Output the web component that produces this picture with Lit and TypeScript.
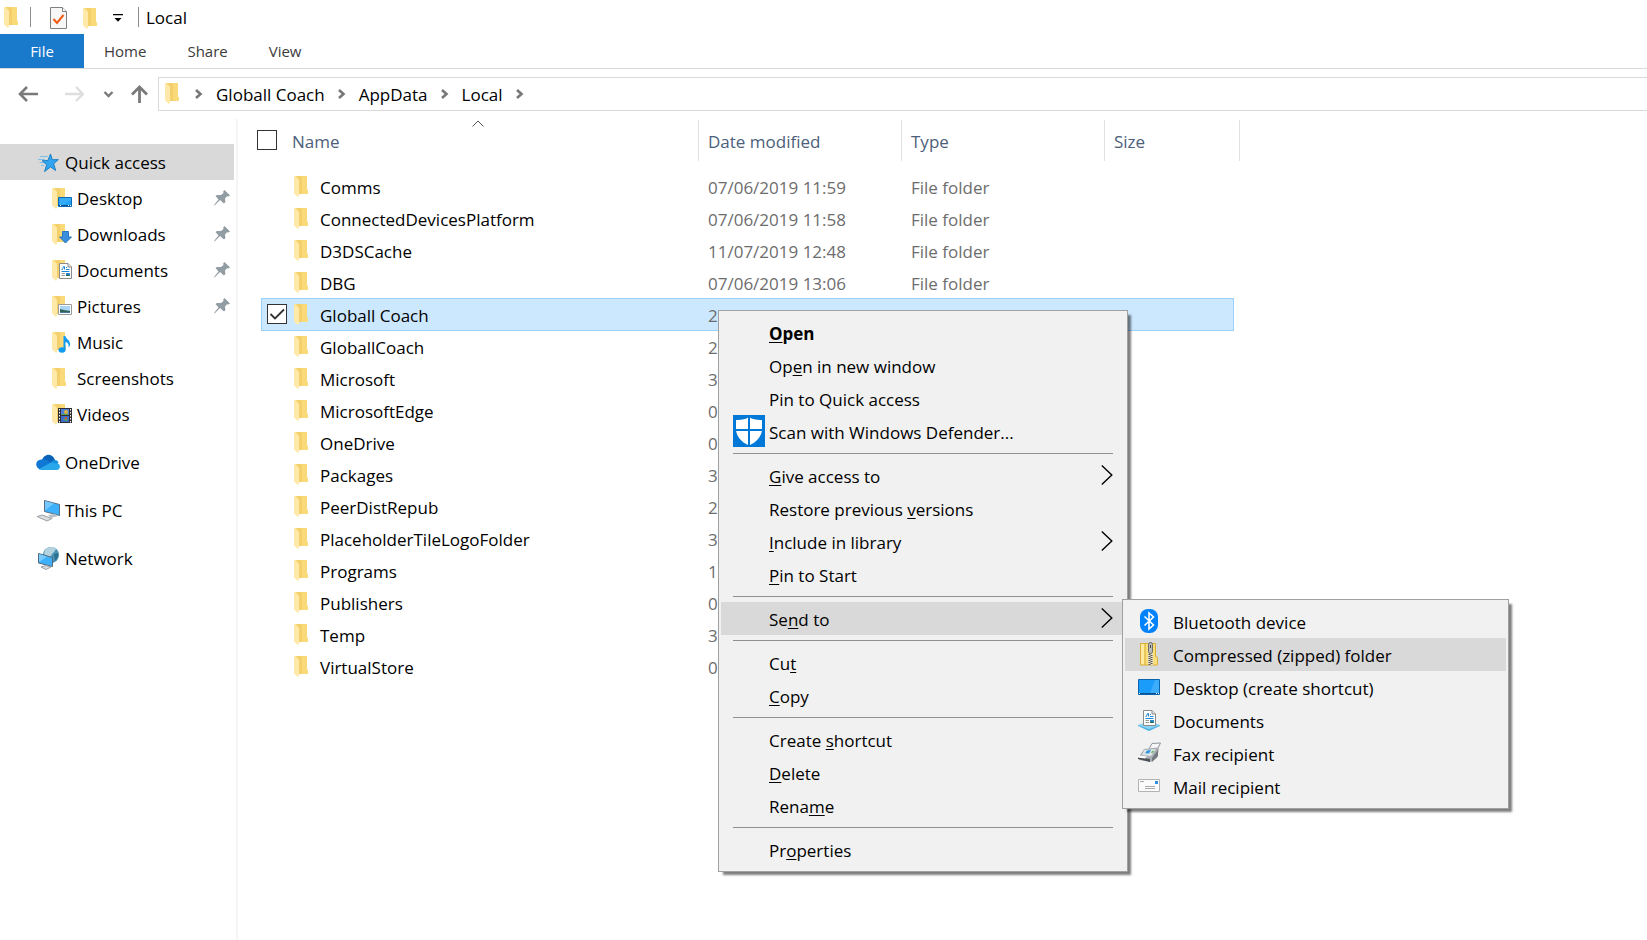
import { LitElement, html, svg, css, nothing } from "lit";
import { customElement, property } from "lit/decorators.js";

/* ---------- icons ---------- */

const folderShape = svg`
  <path d="M1 0h12v13.500l1 .8V18H2z" fill="#fbdc7e"/>
  <path d="M4 2h4v16H4z" fill="#eec963"/>
  <path d="M8 0h5v18H8z" fill="#fad978"/>
  <path d="M0 0l5 3.500V20l-1 1-4-3.500z" fill="#ffe9a9"/>
  <path d="M2.500 0H8v18H5V3.500z" fill="#f4d06c"/>`;

const folder = html`<svg width="14" height="21" viewBox="0 0 14 21" aria-hidden="true">${folderShape}</svg>`;

const docShape = svg`
  <path d="M.5.5h8.500l3.500 3.500v11.500H.5z" fill="#fff" stroke="#8b8b8b"/>
  <path d="M9 .5V4h3.500" fill="#e5e5e5" stroke="#8b8b8b"/>
  <path d="M2.500 6.500h1l1-3h1v3M7 4.500h1M7 6.500h3.500M2.500 8.500h8" stroke="#1f86d6" fill="none"/>
  <path d="M2.500 10.500h3.500M2.500 12.500h3.500" stroke="#999"/>
  <path d="M7 10h4v3H7z" fill="#2b8bd8"/><path d="M7 12l2-1 2 2H7z" fill="#2f6a4f"/>`;

const nested = (overlay: unknown) => html`<svg width="24" height="24" viewBox="0 0 24 24" aria-hidden="true">
  <g transform="translate(4 2)">${folderShape}</g>${overlay}</svg>`;

const icons: Record<string, unknown> = {
  quick: html`<svg width="24" height="24" viewBox="1 0 24 24" aria-hidden="true">
    <path d="M5 6.500h8M3 9.500h7M4.500 12.500h6M6 15.500h3" stroke="#7cc0ef" stroke-width="1"/>
    <path d="M15.500 4l1.800 5.800 6-.2-4.600 4.200 2 6.700-5.200-3.600-6 4.700 2.200-6.800-4.500-4 5.700-.3z" fill="#31a5f0" stroke="#1c7fc4"/>
  </svg>`,
  desktop: nested(svg`<path d="M10.500 11.500h13v9h-13z" fill="#22a2f7" stroke="#0d6bb5"/><path d="M12 12h11v2l-8 5h-3z" fill="#4ab5fb" opacity=".5"/><path d="M10.500 19.500h13" stroke="#0a4f8f"/><path d="M12 19.500h2M20 19.500h3" stroke="#fff" stroke-dasharray="1 1"/>`),
  downloads: nested(svg`<path d="M14.500 9.500h6v5.500h3l-6 6-6-6h3z" fill="#3a8fdc" stroke="#2a76bf"/>`),
  documents: nested(svg`<g transform="translate(11 5)">${docShape}</g>`),
  pictures: nested(svg`<path d="M10.500 10.500h13v10h-13z" fill="#fff" stroke="#9a9a9a"/><path d="M12 12h10v7H12z" fill="#a9d4f4"/><path d="M12 15l4 1 6 1v2H12z" fill="#2f6358"/><path d="M12 18h10v1H12z" fill="#47799e"/>`),
  music: nested(svg`<ellipse cx="14" cy="20" rx="3.500" ry="2.700" fill="#119cf0"/><path d="M15.500 20V6h2c0 3 5 4 4.500 8.500 0 1.200-.6 2.500-1.500 3 .8-3.200-1-5-3-5.500v8z" fill="#119cf0"/>`),
  screenshots: nested(nothing),
  videos: nested(svg`<path d="M10 6h14v15H10z" fill="#2f2f33"/><path d="M13 7h8v6h-8z" fill="#4f7fd8"/><path d="M13 14h8v6h-8z" fill="#3d6bcb"/>
    <circle cx="18" cy="10" r="2" fill="#e0b23c"/><path d="M14 12h6v1h-6zM15 18l3-3 2 4z" fill="#58a24a"/><path d="M17 15h2v2h-2z" fill="#c8553c"/>
    <path d="M11.500 7v14M22.500 7v14" stroke="#fff" stroke-dasharray="1.500 1.500"/>`),
  onedrive: html`<svg width="24" height="24" viewBox="0 0 24 24" aria-hidden="true">
    <path d="M6 10C7.500 5 14 2 18 8l1 2-5 5z" fill="#0a63b8"/>
    <path d="M5.500 9.500C9 8.500 12 10 15 13l-11 6.500C-1.500 17-1 10 5.500 9.500z" fill="#0f78d4"/>
    <path d="M15 12.500c2-3.500 7-3 7.500.5L18 16z" fill="#1490df"/>
    <path d="M3 19l12-6.500 8 1.500c1.800 2.500.8 6-2.500 6H5.500C4.500 20 3.600 19.700 3 19z" fill="#28a8ea"/>
  </svg>`,
  pc: html`<svg width="24" height="24" viewBox="0 0 24 24" aria-hidden="true">
    <path d="M8.500 2.500l15 4v11l-15-4z" fill="#3fb0fb" stroke="#5b6f80"/>
    <path d="M9 3l9 2.500-9 7z" fill="#74c8ff"/>
    <path d="M12 17l7-1 3 2-7 2z" fill="#b9c0c6"/>
    <path d="M1 18.500l5-1.500 10 3.500-5 2.500z" fill="#d9dde0" stroke="#9aa2a8"/>
  </svg>`,
  network: html`<svg width="24" height="24" viewBox="0 0 24 24" aria-hidden="true">
    <circle cx="15" cy="9" r="8" fill="#4a93b4"/>
    <path d="M9 4c3-3.500 8-4 11-1l-2 3-2 2-2 4-4-2-2-2z" fill="#b5d3df"/><path d="M18 8l4-1c.6 3-.5 6-3 8z" fill="#2c708f"/>
    <path d="M2.500 7.500l14 4v9l-14-3.500z" fill="#3fb0fb" stroke="#53697a"/><path d="M3 8l8 2.500L3 16z" fill="#7accff"/>
    <path d="M5 21l5-1.500 5 1.500-5 2.500z" fill="#d9dde0" stroke="#9aa2a8"/>
  </svg>`,
  pin: html`<svg width="16" height="16" viewBox="0 0 16 16" aria-hidden="true">
    <path d="M10.500 0L16 5.500l-1.500 1-1.500-.3-2 2.300.4 3.500-1.400 1.500-4-3.500L.5 15.500 0 15l4.500-5.500L1.500 6 3 5h4l2.500-2-.2-1.800z" fill="#919ca3"/>
  </svg>`,
  defender: html`<svg width="32" height="32" viewBox="0 0 32 32" aria-hidden="true">
    <path d="M0 0h32v32H0z" fill="#0078d7"/>
    <path d="M16 2c3.500 2.500 8 3.200 13 3v9c0 7-5 13-13 16.500C8 27 3 21 3 14V5c5 .2 9.500-.5 13-3z" fill="#fff"/>
    <path d="M16 1v30M2 15h28" stroke="#0078d7" stroke-width="2"/>
  </svg>`,
  arrow: html`<svg class="arrow" width="12" height="20" viewBox="0 0 12 20" aria-hidden="true"><path d="M.8.500l10 9.500-10 9.500" fill="none" stroke="#000" stroke-width="1.400"/></svg>`,
  bluetooth: html`<svg width="24" height="24" viewBox="0 0 24 24" aria-hidden="true">
    <rect x="3" width="18" height="24" rx="8" fill="#0082fc"/>
    <path d="M7.500 7.500l9 8.500-4.500 4V4l4.500 4-9 8.500" fill="none" stroke="#fff" stroke-width="1.600"/>
  </svg>`,
  zip: html`<svg width="24" height="24" viewBox="0 0 24 24" aria-hidden="true">
    <path d="M3.500 1.500h15v13l2 1v7.500h-17z" fill="#fbdf7c" stroke="#d9ae37"/>
    <path d="M8 2v21" stroke="#d9ae37"/><path d="M4 2h3v20H4z" fill="#ffeb9f"/>
    <path d="M11 12h5v11h-5z" fill="#e9e2c8"/><path d="M12.500 12v11" stroke="#555" stroke-dasharray="1 1" stroke-width="2"/><path d="M14.500 13v10" stroke="#555" stroke-dasharray="1 1" stroke-width="2"/>
    <rect x="11.500" y=".5" width="4" height="11" rx="2" fill="#bdbdbd" stroke="#6a6a6a"/><path d="M13 3h1v3h-1z" fill="#444"/>
  </svg>`,
  screen: html`<svg width="24" height="24" viewBox="0 0 24 24" aria-hidden="true">
    <path d="M1.500 4.500h21v15h-21z" fill="#1a9dfa" stroke="#0a64ad"/><path d="M22 5v13h-9L18 5z" fill="#3cadfb"/>
    <path d="M1.500 18.500h21" stroke="#0a4f8f"/><path d="M2 18.500h2M19 18.500h3" stroke="#fff" stroke-dasharray="1 1"/>
  </svg>`,
  library: html`<svg width="24" height="24" viewBox="0 0 24 24" aria-hidden="true">
    <path d="M1 17l11-4 11 4-11 6z" fill="#8ad3f5"/><path d="M1 17l11 4 11-4v1l-11 5-11-5z" fill="#55b4e4"/>
    <g transform="translate(6 2)">${docShape}</g>
  </svg>`,
  fax: html`<svg width="24" height="24" viewBox="0 0 24 24" aria-hidden="true">
    <path d="M12 8l3-5.500 8.500-.5-4 8z" fill="#f4f6f8" stroke="#8e959b"/>
    <path d="M3 14l4-6 13-1.500 2 1.500-2 9-6 4-12-2z" fill="#a9afb4"/>
    <path d="M7 9l12-1-5 7-9-1z" fill="#dfe4e8"/><path d="M10 9.500l4-.4-2 3.400-4-.2z" fill="#2f95dd"/>
    <path d="M15 10l2-.3-1 2-2 .2z" fill="#5ab55a"/>
    <path d="M1 16l12 2v3l-12-3z" fill="#4c5257"/><path d="M2 14.500l8 1-2 2-7-1z" fill="#fff"/>
    <path d="M15 17l6-8v6l-6 6z" fill="#74797e"/>
  </svg>`,
  mail: html`<svg width="24" height="24" viewBox="0 0 24 24" aria-hidden="true">
    <path d="M1.500 5.500h21v12h-21z" fill="#fbfbfb" stroke="#b3b3b3"/>
    <path d="M3 7.500h4M8 12.500h10M8 14.500h10" stroke="#a9a9a9"/><path d="M18 7h3v3h-3z" fill="#2f8fe0"/>
  </svg>`,
};

const crumbArrow = html`<svg class="crumb-arrow" width="8" height="12" viewBox="0 0 8 12" aria-hidden="true"><path d="M1 2l4.500 4L1 10" fill="none" stroke="#777" stroke-width="2.600"/></svg>`;

/* ---------- data ---------- */

const tabs = ["Home", "Share", "View"];
const crumbs = ["Globall Coach", "AppData", "Local"];

const quickLinks = [
  { icon: "desktop", label: "Desktop", pinned: true },
  { icon: "downloads", label: "Downloads", pinned: true },
  { icon: "documents", label: "Documents", pinned: true },
  { icon: "pictures", label: "Pictures", pinned: true },
  { icon: "music", label: "Music", pinned: false },
  { icon: "screenshots", label: "Screenshots", pinned: false },
  { icon: "videos", label: "Videos", pinned: false },
];

const places = [
  { icon: "onedrive", label: "OneDrive" },
  { icon: "pc", label: "This PC" },
  { icon: "network", label: "Network" },
];

// name, date modified, type
const files: [string, string, string?][] = [
  ["Comms", "07/06/2019 11:59", "File folder"],
  ["ConnectedDevicesPlatform", "07/06/2019 11:58", "File folder"],
  ["D3DSCache", "11/07/2019 12:48", "File folder"],
  ["DBG", "07/06/2019 13:06", "File folder"],
  ["Globall Coach", "29/07/2019 17:22", "File folder"],
  ["GloballCoach", "2"],
  ["Microsoft", "3"],
  ["MicrosoftEdge", "0"],
  ["OneDrive", "0"],
  ["Packages", "3"],
  ["PeerDistRepub", "2"],
  ["PlaceholderTileLogoFolder", "3"],
  ["Programs", "1"],
  ["Publishers", "0"],
  ["Temp", "3"],
  ["VirtualStore", "0"],
];

interface Entry {
  label: string; // an underscore stands before the access key letter
  icon?: string;
  bold?: boolean;
  active?: boolean;
  arrow?: boolean;
  children?: Entry[];
}

const contextMenu: Entry[][] = [
  [
    { label: "_Open", bold: true },
    { label: "Op_en in new window" },
    { label: "Pin to Quick access" },
    { label: "Scan with Windows Defender...", icon: "defender" },
  ],
  [
    { label: "_Give access to", arrow: true },
    { label: "Restore previous _versions" },
    { label: "_Include in library", arrow: true },
    { label: "_Pin to Start" },
  ],
  [
    {
      label: "Se_nd to",
      arrow: true,
      active: true,
      children: [
        { label: "Bluetooth device", icon: "bluetooth" },
        { label: "Compressed (zipped) folder", icon: "zip", active: true },
        { label: "Desktop (create shortcut)", icon: "screen" },
        { label: "Documents", icon: "library" },
        { label: "Fax recipient", icon: "fax" },
        { label: "Mail recipient", icon: "mail" },
      ],
    },
  ],
  [{ label: "Cu_t" }, { label: "_Copy" }],
  [{ label: "Create _shortcut" }, { label: "_Delete" }, { label: "Rena_me" }],
  [{ label: "Pr_operties" }],
];

const withKey = (label: string) => {
  const at = label.indexOf("_");
  return at < 0
    ? label
    : html`${label.slice(0, at)}<u>${label[at + 1]}</u>${label.slice(at + 2)}`;
};

/* ---------- menu ---------- */

@customElement("popup-menu")
class PopupMenu extends LitElement {
  @property({ attribute: false }) groups: Entry[][] = [];

  static styles = css`
    :host {
      display: block;
      box-sizing: border-box;
      padding: 5px 2px;
      background: #f1f1f1;
      border: 1px solid #a0a0a0;
      box-shadow: 4px 4px 2px -1px rgba(0, 0, 0, 0.5);
    }
    .entry {
      position: relative;
    }
    .item {
      display: flex;
      align-items: center;
      box-sizing: border-box;
      width: 100%;
      height: 33px;
      margin: 0;
      padding: 0 12px;
      border: 0;
      background: none;
      color: #000;
      font: inherit;
      text-align: left;
      white-space: nowrap;
    }
    .active {
      background: #d9d9d9;
    }
    .bold {
      font-weight: 700;
    }
    .slot {
      display: flex;
      flex: none;
      width: 36px;
      margin-bottom: 1px;
    }
    .label {
      flex: 1;
      padding-top: 2px;
    }
    .arrow {
      margin-bottom: 2px;
    }
    u {
      text-decoration-thickness: 1px;
      text-underline-offset: 2px;
      text-decoration-skip-ink: none;
    }
    .rule {
      height: 1px;
      margin: 5px 12px;
      border: 0;
      background: #919191;
    }
    .sub {
      position: absolute;
      top: -3px;
      left: calc(100% - 3px);
      width: 387px;
      z-index: 1;
    }
    svg {
      display: block;
    }
  `;

  render() {
    return this.groups.map(
      (group, i) => html`
        ${i ? html`<hr class="rule" />` : nothing}
        ${group.map(
          (e) => html`<div class="entry">
            <button type="button" role="menuitem" class="item ${e.active ? "active" : ""} ${e.bold ? "bold" : ""}">
              <span class="slot">${e.icon ? icons[e.icon] : nothing}</span>
              <span class="label">${withKey(e.label)}</span>
              ${e.arrow ? icons.arrow : nothing}
            </button>
            ${e.children
              ? html`<popup-menu class="sub" role="menu" .groups=${[e.children]}></popup-menu>`
              : nothing}
          </div>`
        )}
      `
    );
  }
}

/* ---------- window ---------- */

@customElement("app-root")
class AppRoot extends LitElement {
  static styles = css`
    :host {
      display: flex;
      flex-direction: column;
      position: relative;
      min-height: 100vh;
      overflow: hidden;
      background: #fff;
      color: #000;
      font: 17px/24px "Open Sans", "Noto Sans", sans-serif;
    }
    svg {
      display: block;
      flex: none;
    }
    button {
      margin: 0;
      padding: 0;
      border: 0;
      background: none;
      color: inherit;
      font: inherit;
    }
    a {
      color: inherit;
      text-decoration: none;
    }

    .title-bar {
      display: flex;
      align-items: center;
      height: 34px;
      padding-left: 4px;
    }
    .divider {
      width: 1px;
      height: 20px;
      background: #8c8c8c;
    }
    .title-bar .divider:first-of-type {
      margin: 0 19px 0 12px;
    }
    .tools {
      display: flex;
      align-items: center;
      gap: 16px;
      margin-right: 15px;
    }
    .tools svg {
      margin-top: 2px;
    }
    .title {
      margin: 0 0 0 7px;
      padding-top: 2px;
      font: inherit;
    }

    .tabs {
      display: flex;
      gap: 1px;
      height: 34px;
      border-bottom: 1px solid #dadada;
      font-size: 15px;
      color: #3b3b3b;
    }
    .tab {
      padding: 0 20px;
    }
    .file {
      width: 84px;
      margin-right: -1px;
      background: #1979ca;
      color: #fff;
    }

    .nav {
      display: flex;
      align-items: center;
      padding: 8px 0 8px 18px;
    }
    .arrows {
      display: flex;
      align-items: center;
      margin-right: 9px;
    }
    .back {
      margin-right: 26px;
    }
    .forward {
      margin-right: 19px;
    }
    .recent {
      margin-right: 17px;
    }
    .address {
      display: flex;
      flex: 1;
      align-items: center;
      height: 32px;
      padding-left: 6px;
      border: 1px solid #d9d9d9;
      border-right: 0;
    }
    .address > svg:first-child {
      margin: 0 3px 2px 0;
    }
    .crumb {
      padding-top: 1px;
    }
    .crumb-arrow {
      margin: 0 13px;
    }

    .body {
      display: flex;
      flex: 1;
    }
    .side {
      flex: none;
      box-sizing: border-box;
      width: 238px;
      padding: 25px 2px 0 0;
      border-right: 2px solid #f5f5f5;
    }
    .place {
      display: flex;
      align-items: center;
      gap: 5px;
      height: 36px;
      padding: 0 4px 0 36px;
    }
    .place .name {
      flex: 1;
      padding-top: 2px;
    }
    .current {
      background: #d9d9d9;
    }
    .child {
      padding-left: 48px;
    }
    .root {
      margin-top: 12px;
    }

    .list {
      flex: 1;
      padding: 0 0 0 19px;
    }
    table,
    thead,
    tbody {
      display: block;
    }
    tr {
      display: grid;
      align-items: center;
    }
    th {
      padding: 0;
      font-weight: 400;
      text-align: left;
      color: #4c607a;
    }
    td {
      padding: 2px 0 0 10px;
      color: #6d6d6d;
    }
    .head {
      position: relative;
      grid-template-columns: 35px 406px 203px 203px 136px;
      width: 983px;
      height: 41px;
      margin: 1px 0 9px;
    }
    .head th {
      display: flex;
      align-items: center;
      box-sizing: border-box;
      height: 100%;
    }
    .head .text {
      padding-top: 2px;
    }
    .head .col {
      padding-left: 9px;
      border-left: 1px solid #e2e2e2;
    }
    .head .last {
      border-right: 1px solid #e2e2e2;
    }
    .sort {
      position: absolute;
      top: 0;
      left: 215px;
    }
    .row {
      grid-template-columns: 32px 404px 203px 203px;
      box-sizing: border-box;
      width: 973px;
      height: 33px;
      margin: 0 0 -1px 4px;
      border: 1px solid transparent;
    }
    .row .tick {
      display: flex;
      padding: 0 0 0 5px;
    }
    .row .file-name {
      display: flex;
      align-items: center;
      gap: 12px;
      padding: 0;
      color: #000;
    }
    .file-name span {
      padding-top: 2px;
    }
    .selected {
      background: #cce8ff;
      border-color: #99d1ff;
    }
    input {
      appearance: none;
      box-sizing: border-box;
      width: 20px;
      height: 20px;
      margin: 0 0 1px;
      border: 1px solid #333;
      background: #fff;
    }
    input:checked {
      background: #fff
        url('data:image/svg+xml,<svg xmlns="http://www.w3.org/2000/svg" viewBox="0 0 18 18"><path d="M2.500 9l4.500 4.500 9-9" fill="none" stroke="%23333" stroke-width="1.800"/></svg>');
    }

    .menu {
      position: absolute;
      top: 310px;
      left: 718px;
      width: 410px;
    }
  `;

  render() {
    return html`
      <header>
        <div class="title-bar">
          ${folder}
          <div class="divider"></div>
          <div class="tools">
            <button type="button" aria-label="Properties">
              <svg width="17" height="22" viewBox="0 0 17 22">
                <path d="M.5.500h12l4 4v17H.5z" fill="#f7f7f7" stroke="#808080" />
                <path d="M12.500.500v4h4" fill="#fff" stroke="#808080" />
                <path d="M3.500 12l3.500 4 6.500-8" fill="none" stroke="#f05a14" stroke-width="2" />
              </svg>
            </button>
            <button type="button" aria-label="New folder">${folder}</button>
            <button type="button" aria-label="Customize Quick Access Toolbar">
              <svg width="10" height="8" viewBox="0 0 10 8"><path d="M0 0h10v1.200H0zM1.500 4h7L5 7.800z" /></svg>
            </button>
          </div>
          <div class="divider"></div>
          <h1 class="title">Local</h1>
        </div>
        <nav class="tabs">
          <button type="button" class="file">File</button>
          ${tabs.map((t) => html`<button type="button" class="tab">${t}</button>`)}
        </nav>
      </header>

      <div class="nav">
        <div class="arrows">
          <button type="button" class="back" aria-label="Back">
            <svg width="20" height="16" viewBox="0 0 20 16"><path d="M9 1L2 8l7 7M2 8h18" fill="none" stroke="#7a7a7a" stroke-width="2.600" /></svg>
          </button>
          <button type="button" class="forward" aria-label="Forward">
            <svg width="20" height="16" viewBox="0 0 20 16"><path d="M12 1l7 7-7 7M19 8H1" fill="none" stroke="#dedede" stroke-width="2.400" /></svg>
          </button>
          <button type="button" class="recent" aria-label="Recent locations">
            <svg width="11" height="7" viewBox="0 0 11 7"><path d="M1.500 1l4 4 4-4" fill="none" stroke="#7a7a7a" stroke-width="2.400" /></svg>
          </button>
          <button type="button" aria-label="Up">
            <svg width="18" height="18" viewBox="0 0 18 18"><path d="M1 9.500L8.500 2 16 9.500M8.500 2v16" fill="none" stroke="#7a7a7a" stroke-width="2.800" /></svg>
          </button>
        </div>
        <div class="address">
          ${folder} ${crumbArrow}
          ${crumbs.map((c) => html`<button type="button" class="crumb">${c}</button>${crumbArrow}`)}
        </div>
      </div>

      <div class="body">
        <nav class="side">
          <a class="place current" href="#quick">${icons.quick}<span class="name">Quick access</span></a>
          ${quickLinks.map(
            (q) => html`<a class="place child" href="#${q.label}">
              ${icons[q.icon]}<span class="name">${q.label}</span>${q.pinned ? icons.pin : nothing}
            </a>`
          )}
          ${places.map(
            (p) => html`<a class="place root" href="#${p.label}">${icons[p.icon]}<span class="name">${p.label}</span></a>`
          )}
        </nav>

        <main class="list">
          <table>
            <thead>
              <tr class="head">
                <th><input type="checkbox" aria-label="Select all" /></th>
                <th class="text">
                  Name
                  <svg class="sort" width="12" height="7" viewBox="0 0 12 7"><path d="M.5 6.500L6 1l5.500 5.500" fill="none" stroke="#555" /></svg>
                </th>
                <th class="text col">Date modified</th>
                <th class="text col">Type</th>
                <th class="text col last">Size</th>
              </tr>
            </thead>
            <tbody>
              ${files.map(([name, date, type], i) => {
                const on = i === 4;
                return html`<tr class="row ${on ? "selected" : ""}">
                  <td class="tick">${on ? html`<input type="checkbox" aria-label=${name} checked />` : nothing}</td>
                  <td class="file-name">${folder}<span>${name}</span></td>
                  <td>${date}</td>
                  <td>${type ?? nothing}</td>
                </tr>`;
              })}
            </tbody>
          </table>
        </main>
      </div>

      <popup-menu class="menu" role="menu" .groups=${contextMenu}></popup-menu>
    `;
  }
}
